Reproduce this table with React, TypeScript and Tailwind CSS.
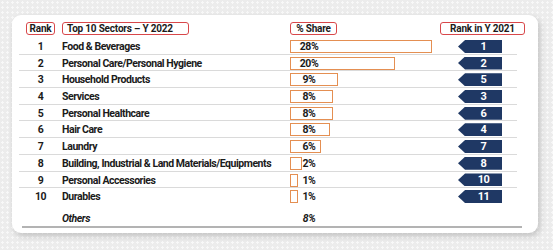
import React from 'react';

type Row = {
  rank: number;
  sector: string;
  share: string;
  barWidth: number;
  prevRank: number;
};

const rows: Row[] = [
  { rank: 1, sector: 'Food & Beverages', share: '28%', barWidth: 142, prevRank: 1 },
  { rank: 2, sector: 'Personal Care/Personal Hygiene', share: '20%', barWidth: 105, prevRank: 2 },
  { rank: 3, sector: 'Household Products', share: '9%', barWidth: 48, prevRank: 5 },
  { rank: 4, sector: 'Services', share: '8%', barWidth: 43, prevRank: 3 },
  { rank: 5, sector: 'Personal Healthcare', share: '8%', barWidth: 43, prevRank: 6 },
  { rank: 6, sector: 'Hair Care', share: '8%', barWidth: 40, prevRank: 4 },
  { rank: 7, sector: 'Laundry', share: '6%', barWidth: 31, prevRank: 7 },
  { rank: 8, sector: 'Building, Industrial & Land Materials/Equipments', share: '2%', barWidth: 12, prevRank: 8 },
  { rank: 9, sector: 'Personal Accessories', share: '1%', barWidth: 8, prevRank: 10 },
  { rank: 10, sector: 'Durables', share: '1%', barWidth: 8, prevRank: 11 },
];

// red outlined column title
const HeaderBox: React.FC<{ text: string; className?: string }> = ({ text, className }) => (
  <div
    className={`h-[13px] border-[1.5px] border-[#d8474a] rounded-[3px] flex items-center text-[10px] font-bold leading-none tracking-[-0.2px] ${className ?? ''}`}
  >
    {text}
  </div>
);

const RankArrow: React.FC<{ value: number }> = ({ value }) => (
  <div className="ml-[18px] w-[44px] h-[13px] bg-[#1f3864] [clip-path:polygon(16%_0,100%_0,100%_100%,16%_100%,0_50%)] pl-[7px] flex items-center justify-center text-white text-[11px] font-bold leading-none">
    {value}
  </div>
);

export default function App() {
  return (
    <div className="w-[553px] h-[250px] bg-[#ececec] bg-[radial-gradient(#f8f8f8_1px,transparent_1.3px)] bg-[length:5px_5px] pt-[15px] pl-[12px] font-['Roboto',sans-serif] text-[#1b1b1b]">
      <div className="w-[526px] h-[218px] bg-white rounded-[9px] shadow-[2px_3px_6px_rgba(0,0,0,0.18)] pl-[7px] pt-[7px]">
        {/* column titles */}
        <div className="grid grid-cols-[43px_228px_150px_85px] h-[16px] items-start">
          <div className="flex justify-center">
            <HeaderBox text="Rank" className="w-[29px] justify-center" />
          </div>
          <HeaderBox text="Top 10 Sectors – Y 2022" className="w-[127px] pl-[4px]" />
          <HeaderBox text="% Share" className="w-[47px] justify-center" />
          <HeaderBox text="Rank in Y 2021" className="w-[85px] justify-center" />
        </div>

        <div className="w-[498px]">
          {rows.map((r, i) => (
            <div
              key={r.rank}
              className={`grid grid-cols-[43px_228px_150px_77px] h-[16.7px] items-center text-[10.5px] font-bold tracking-[-0.45px] ${
                i < rows.length - 1 ? 'border-b border-[#dadada]' : ''
              }`}
            >
              <div className="text-center pt-[1px]">{r.rank}</div>
              <div className="whitespace-nowrap pt-[1px]">{r.sector}</div>
              <div className="relative h-full flex items-center">
                <div
                  className="absolute left-0 top-[2px] h-[13px] border-[1.5px] border-[#e48f52] bg-white"
                  style={{ width: r.barWidth }}
                />
                <span className="relative w-[38px] text-center pt-[1px]">{r.share}</span>
              </div>
              <RankArrow value={r.prevRank} />
            </div>
          ))}

          <div className="grid grid-cols-[43px_228px_150px_77px] h-[21px] items-end text-[10.5px] leading-[15px] font-bold italic tracking-[-0.45px]">
            <div />
            <div>Others</div>
            <div className="w-[38px] text-center">8%</div>
            <div />
          </div>
        </div>
        <div className="ml-[3px] w-[500px] h-[2px] bg-[#b3b3b3]" />
      </div>
    </div>
  );
}
